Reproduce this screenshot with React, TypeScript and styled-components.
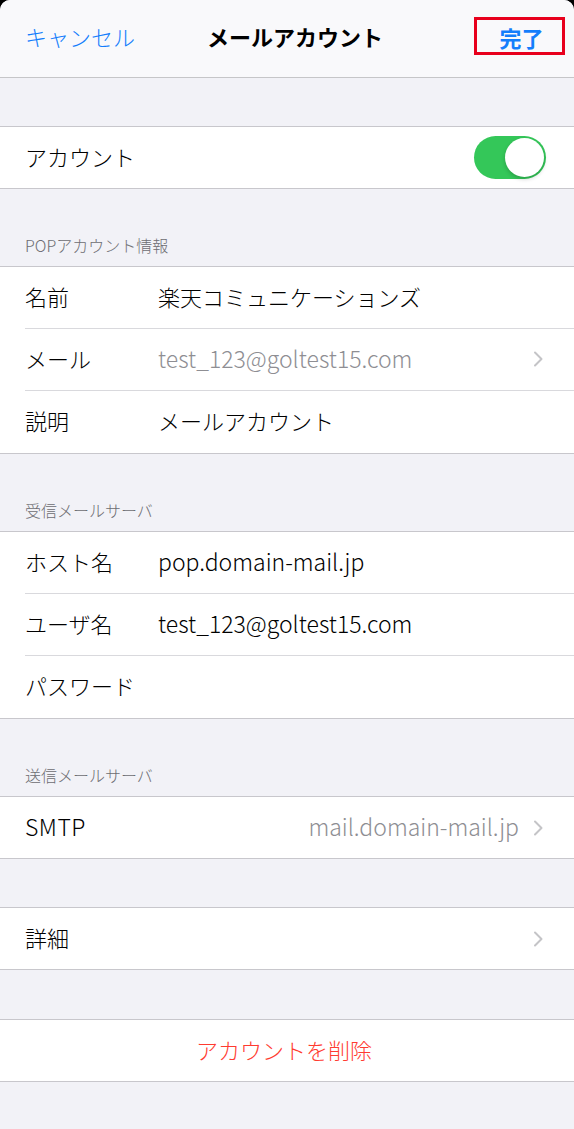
import React from "react";
import styled, { createGlobalStyle } from "styled-components";

const GlobalStyle = createGlobalStyle`
  html, body {
    margin: 0;
    padding: 0;
    background: #000;
  }
  * { box-sizing: border-box; }
`;

const FONT = `"Noto Sans CJK JP", "Noto Sans", sans-serif`;

const Screen = styled.div`
  width: 574px;
  min-height: 1129px;
  background: #f2f2f7;
  border-radius: 10px 10px 0 0;
  overflow: hidden;
  font-family: ${FONT};
  font-weight: 300;
  color: #000;
`;

const NavBar = styled.header`
  height: 78px;
  background: #f9f9fb;
  border-bottom: 1px solid #c6c6c8;
  display: grid;
  grid-template-columns: 1fr auto 1fr;
  align-items: center;
  padding: 0 9px 6px 25px;
`;

const NavButton = styled.span`
  font-size: 22px;
  line-height: 28px;
  color: #147efb;
  justify-self: start;
`;

const NavTitle = styled.h1`
  margin: 0;
  font-size: 22px;
  line-height: 28px;
  font-weight: 700;
`;

const DoneButton = styled.span`
  justify-self: end;
  width: 91px;
  height: 38px;
  border: 3px solid #e8001c;
  display: flex;
  align-items: center;
  justify-content: center;
  padding-left: 4px;
  padding-top: 2px;
  font-size: 22px;
  font-weight: 700;
  color: #147efb;
`;

const Spacer = styled.div<{ $h: number }>`
  height: ${(p) => p.$h}px;
`;

const SectionHeader = styled.div`
  height: 77px;
  display: flex;
  align-items: flex-end;
  padding: 0 25px 10px;
  font-size: 16px;
  line-height: 22px;
  color: #6d6d72;
`;

const Group = styled.section`
  background: #fff;
  border-top: 1px solid #c8c7cc;
  border-bottom: 1px solid #c8c7cc;
  & > *:last-child:not(:first-child) {
    height: 63px;
  }
`;

const Row = styled.div<{ $center?: boolean }>`
  position: relative;
  height: 61px;
  display: flex;
  align-items: center;
  justify-content: ${(p) => (p.$center ? "center" : "flex-start")};
  padding: 0 31px 3px 25px;
  font-size: 22px;
  line-height: 28px;
  & + & {
    height: 62px;
  }
  & + &::before {
    content: "";
    position: absolute;
    top: 0;
    left: 25px;
    right: 0;
    height: 1px;
    background: #d9d9dd;
  }
`;

const Label = styled.span<{ $latin?: boolean }>`
  width: 133px;
  flex-shrink: 0;
  font-size: ${(p) => (p.$latin ? "23px" : "inherit")};
  letter-spacing: ${(p) => (p.$latin ? "0.5px" : "normal")};
`;

const Value = styled.span<{ $muted?: boolean; $latin?: boolean }>`
  flex: 1;
  color: ${(p) => (p.$muted ? "#8e8e93" : "#000")};
  white-space: nowrap;
  font-size: ${(p) => (p.$latin ? "23px" : "inherit")};
`;

const RightValue = styled.span`
  margin-left: auto;
  color: #8e8e93;
  font-size: 23px;
`;

const Danger = styled.span`
  color: #ff3b30;
`;

const Toggle = styled.span`
  margin-left: auto;
  margin-right: -3px;
  margin-top: 3px;
  width: 72px;
  height: 43px;
  border-radius: 22px;
  background: #34c759;
  position: relative;
  &::after {
    content: "";
    position: absolute;
    right: 2px;
    top: 2px;
    width: 39px;
    height: 39px;
    border-radius: 50%;
    background: #fff;
    box-shadow: 0 2px 4px rgba(0, 0, 0, 0.2);
  }
`;

const ChevronBox = styled.svg`
  flex-shrink: 0;
  margin-left: 14px;
  margin-top: 3px;
`;

const Chevron = () => (
  <ChevronBox width="10" height="16" viewBox="0 0 10 16">
    <path d="M2 1.5 L8.5 8 L2 14.5" fill="none" stroke="#c4c4c7" strokeWidth="2" strokeLinecap="round" strokeLinejoin="round" />
  </ChevronBox>
);

export default function App() {
  return (
    <>
      <GlobalStyle />
      <Screen>
        <NavBar>
          <NavButton>キャンセル</NavButton>
          <NavTitle>メールアカウント</NavTitle>
          <DoneButton>完了</DoneButton>
        </NavBar>
        <Spacer $h={48} />
        <Group>
          <Row>
            <span>アカウント</span>
            <Toggle />
          </Row>
        </Group>
        <SectionHeader>POPアカウント情報</SectionHeader>
        <Group>
          <Row>
            <Label>名前</Label>
            <Value>楽天コミュニケーションズ</Value>
          </Row>
          <Row>
            <Label>メール</Label>
            <Value $muted $latin>test_123@goltest15.com</Value>
            <Chevron />
          </Row>
          <Row>
            <Label>説明</Label>
            <Value>メールアカウント</Value>
          </Row>
        </Group>
        <SectionHeader>受信メールサーバ</SectionHeader>
        <Group>
          <Row>
            <Label>ホスト名</Label>
            <Value $latin>pop.domain-mail.jp</Value>
          </Row>
          <Row>
            <Label>ユーザ名</Label>
            <Value $latin>test_123@goltest15.com</Value>
          </Row>
          <Row>
            <Label>パスワード</Label>
            <Value />
          </Row>
        </Group>
        <SectionHeader>送信メールサーバ</SectionHeader>
        <Group>
          <Row>
            <Label $latin>SMTP</Label>
            <RightValue>mail.domain-mail.jp</RightValue>
            <Chevron />
          </Row>
        </Group>
        <Spacer $h={48} />
        <Group>
          <Row>
            <Label>詳細</Label>
            <RightValue />
            <Chevron />
          </Row>
        </Group>
        <Spacer $h={49} />
        <Group>
          <Row $center>
            <Danger>アカウントを削除</Danger>
          </Row>
        </Group>
      </Screen>
    </>
  );
}
